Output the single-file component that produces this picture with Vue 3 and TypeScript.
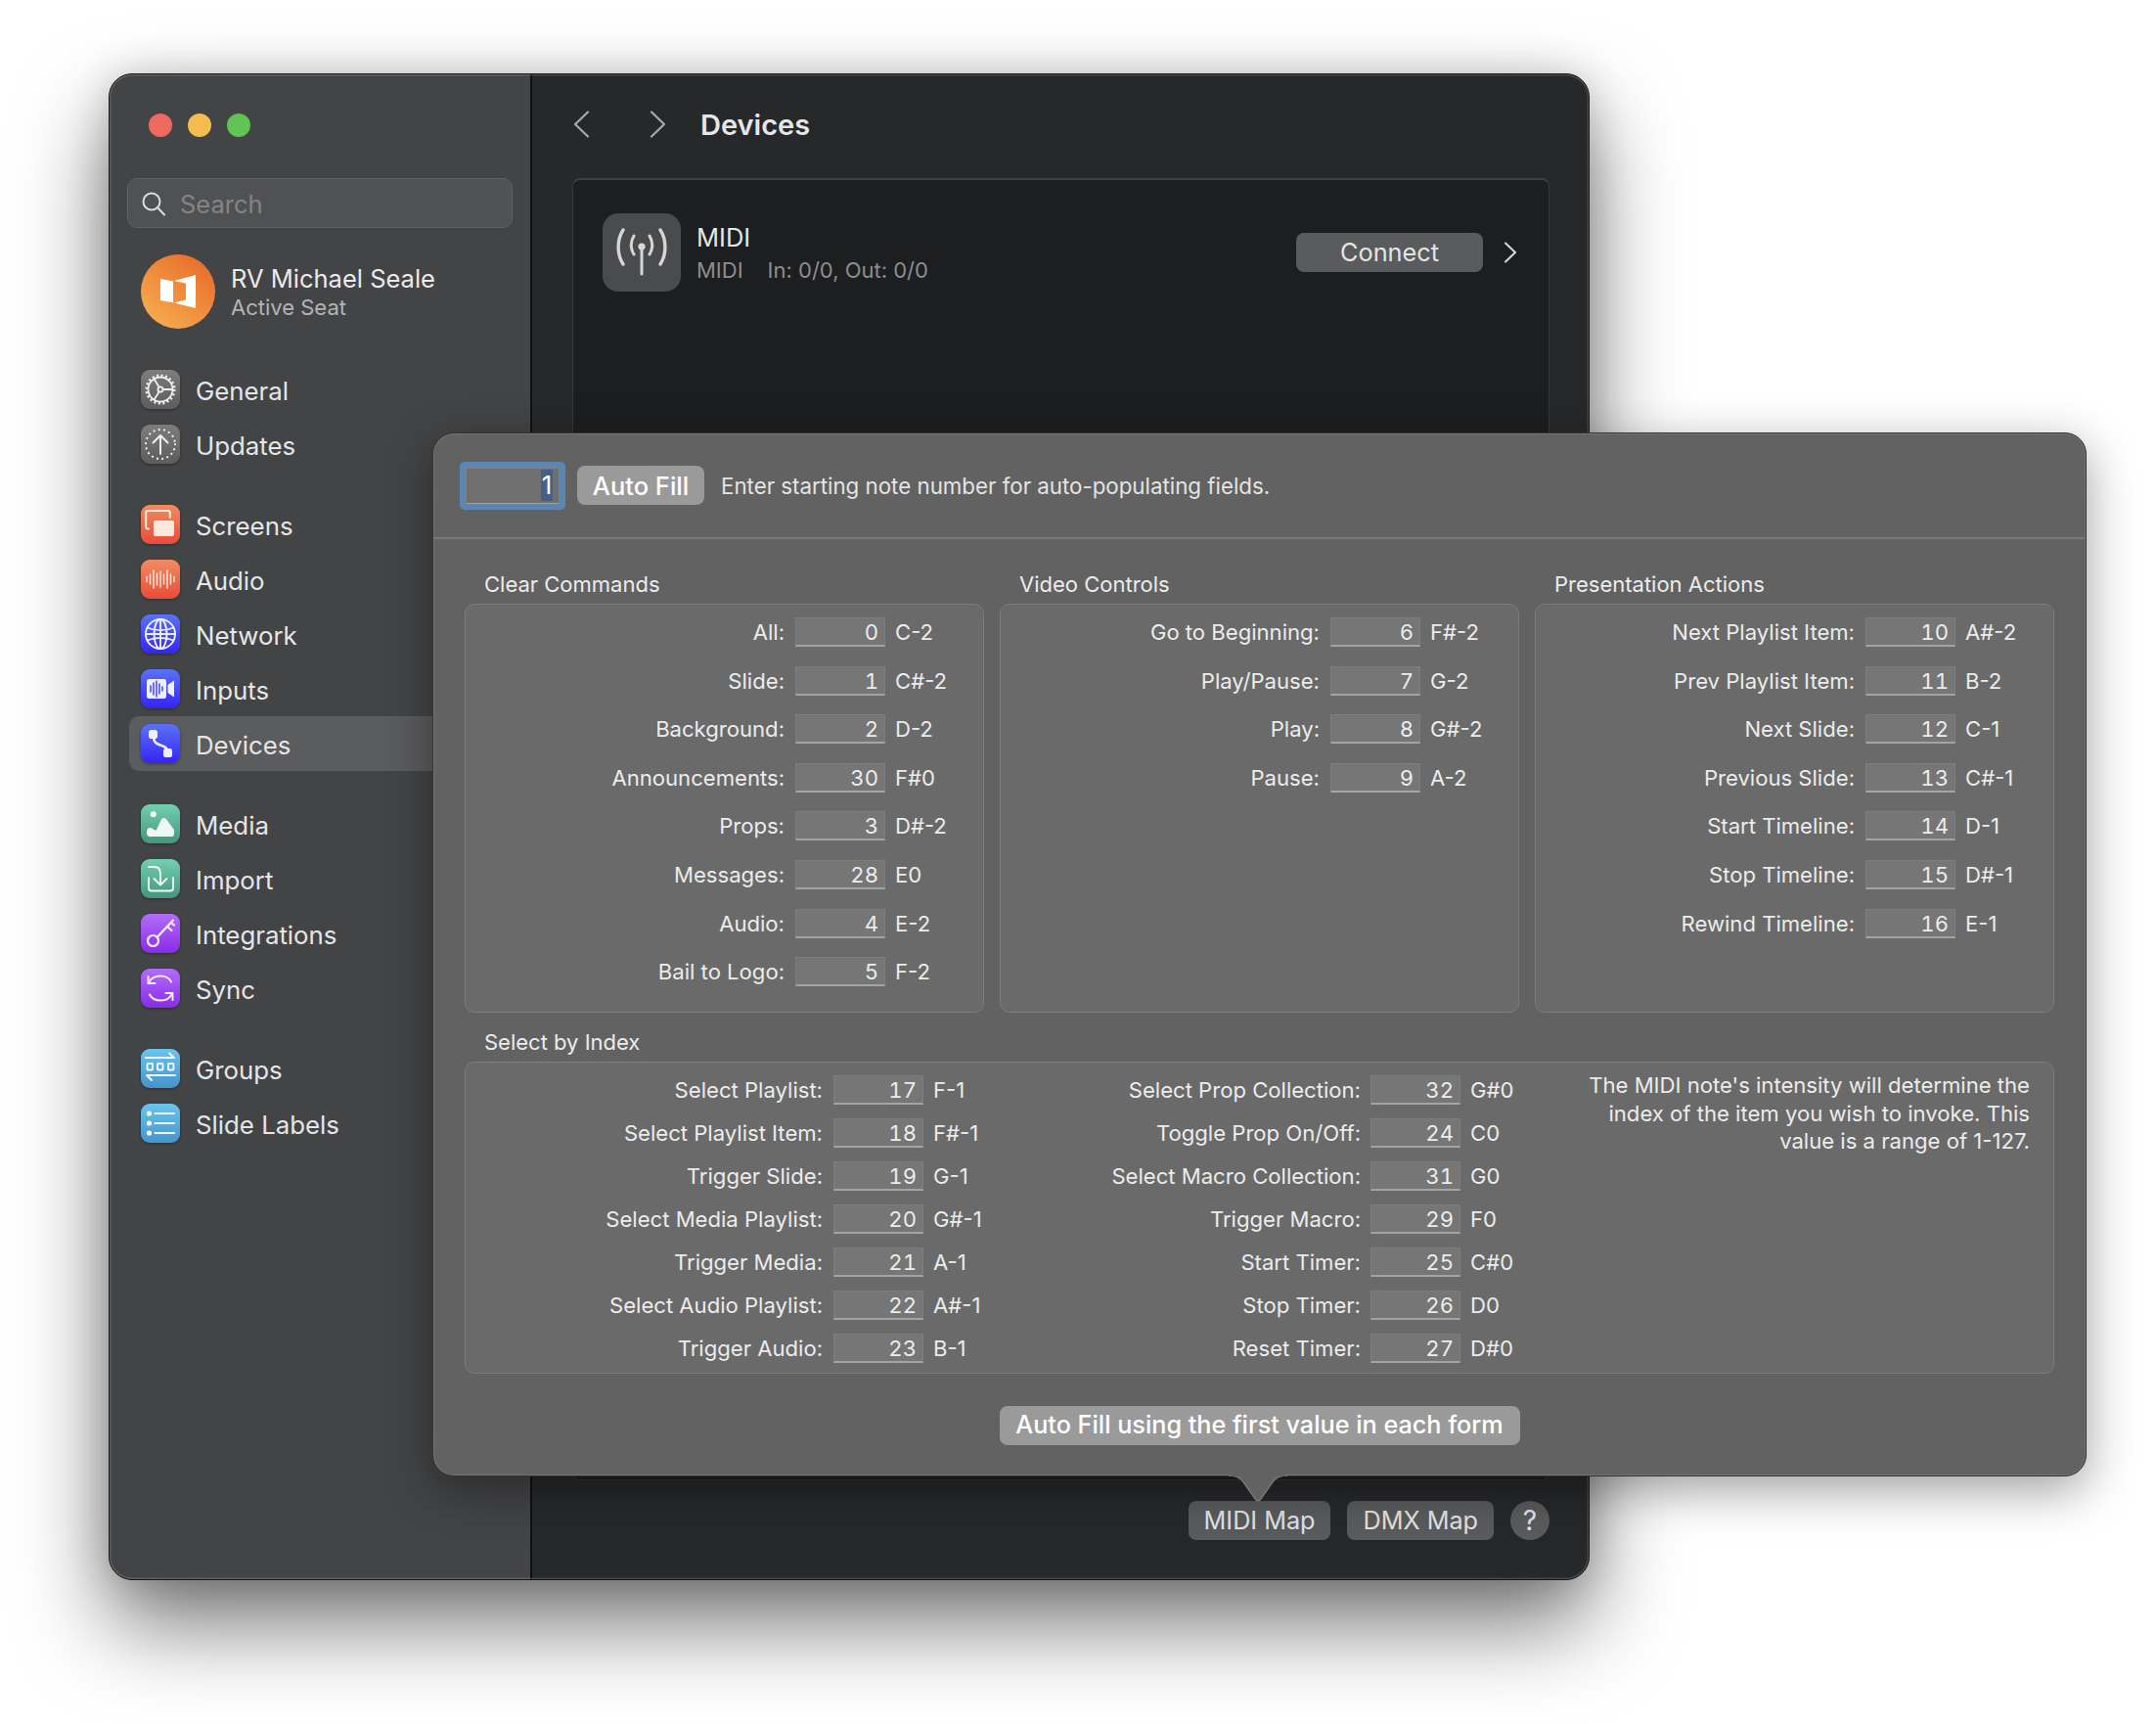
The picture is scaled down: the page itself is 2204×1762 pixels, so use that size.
<script setup lang="ts">
interface NavItem {
  label: string;
  icon: string;
  tint: string;
}

interface MapRow {
  label: string;
  value: number;
  note: string;
}

const navGroups: NavItem[][] = [
  [
    { label: "General", icon: "general", tint: "gray" },
    { label: "Updates", icon: "updates", tint: "gray" },
  ],
  [
    { label: "Screens", icon: "screens", tint: "red" },
    { label: "Audio", icon: "audio", tint: "red" },
    { label: "Network", icon: "network", tint: "blue" },
    { label: "Inputs", icon: "inputs", tint: "blue" },
    { label: "Devices", icon: "devices", tint: "blue" },
  ],
  [
    { label: "Media", icon: "media", tint: "green" },
    { label: "Import", icon: "import", tint: "green" },
    { label: "Integrations", icon: "integrations", tint: "purple" },
    { label: "Sync", icon: "sync", tint: "purple" },
  ],
  [
    { label: "Groups", icon: "groups", tint: "sky" },
    { label: "Slide Labels", icon: "labels", tint: "sky" },
  ],
];

const wave = [
  [6, 2.5],
  [9.5, 5],
  [13, 9],
  [16.5, 6],
  [20, 8],
  [23.5, 5],
  [27, 9],
  [30.5, 5],
  [34, 2.5],
];

const inputBars = [
  [10, 3],
  [13, 6],
  [16, 8],
  [19, 5],
  [22, 2],
];

const sections: { title: string; rows: MapRow[] }[] = [
  {
    title: "Clear Commands",
    rows: [
      { label: "All:", value: 0, note: "C-2" },
      { label: "Slide:", value: 1, note: "C#-2" },
      { label: "Background:", value: 2, note: "D-2" },
      { label: "Announcements:", value: 30, note: "F#0" },
      { label: "Props:", value: 3, note: "D#-2" },
      { label: "Messages:", value: 28, note: "E0" },
      { label: "Audio:", value: 4, note: "E-2" },
      { label: "Bail to Logo:", value: 5, note: "F-2" },
    ],
  },
  {
    title: "Video Controls",
    rows: [
      { label: "Go to Beginning:", value: 6, note: "F#-2" },
      { label: "Play/Pause:", value: 7, note: "G-2" },
      { label: "Play:", value: 8, note: "G#-2" },
      { label: "Pause:", value: 9, note: "A-2" },
    ],
  },
  {
    title: "Presentation Actions",
    rows: [
      { label: "Next Playlist Item:", value: 10, note: "A#-2" },
      { label: "Prev Playlist Item:", value: 11, note: "B-2" },
      { label: "Next Slide:", value: 12, note: "C-1" },
      { label: "Previous Slide:", value: 13, note: "C#-1" },
      { label: "Start Timeline:", value: 14, note: "D-1" },
      { label: "Stop Timeline:", value: 15, note: "D#-1" },
      { label: "Rewind Timeline:", value: 16, note: "E-1" },
    ],
  },
];

const indexLeft: MapRow[] = [
  { label: "Select Playlist:", value: 17, note: "F-1" },
  { label: "Select Playlist Item:", value: 18, note: "F#-1" },
  { label: "Trigger Slide:", value: 19, note: "G-1" },
  { label: "Select Media Playlist:", value: 20, note: "G#-1" },
  { label: "Trigger Media:", value: 21, note: "A-1" },
  { label: "Select Audio Playlist:", value: 22, note: "A#-1" },
  { label: "Trigger Audio:", value: 23, note: "B-1" },
];

const indexRight: MapRow[] = [
  { label: "Select Prop Collection:", value: 32, note: "G#0" },
  { label: "Toggle Prop On/Off:", value: 24, note: "C0" },
  { label: "Select Macro Collection:", value: 31, note: "G0" },
  { label: "Trigger Macro:", value: 29, note: "F0" },
  { label: "Start Timer:", value: 25, note: "C#0" },
  { label: "Stop Timer:", value: 26, note: "D0" },
  { label: "Reset Timer:", value: 27, note: "D#0" },
];

const indexColumns = [
  { name: "left", rows: indexLeft },
  { name: "right", rows: indexRight },
];

const noteLines = [
  "The MIDI note's intensity will determine the",
  "index of the item you wish to invoke. This",
  "value is a range of 1-127.",
];
</script>

<template>
  <div class="page">
    <div class="window">
      <aside class="sidebar">
        <div class="lights">
          <span class="light red"></span>
          <span class="light yellow"></span>
          <span class="light green"></span>
        </div>

        <div class="search">
          <svg width="26" height="26" viewBox="0 0 26 26" fill="none" stroke="#dcdcdc" stroke-width="2">
            <circle cx="11" cy="11" r="8.5" />
            <path d="M17.2 17.2 24 24.5" stroke-linecap="round" />
          </svg>
          <span>Search</span>
        </div>

        <div class="profile">
          <svg class="avatar" width="76" height="76" viewBox="0 0 76 76">
            <defs>
              <linearGradient id="avatarFill" x1="0.85" y1="0.1" x2="0.2" y2="0.95">
                <stop offset="0" stop-color="#e96f2c" />
                <stop offset="1" stop-color="#f5ab4e" />
              </linearGradient>
            </defs>
            <circle cx="38" cy="38" r="38" fill="url(#avatarFill)" />
            <path fill="#fff" d="M20 25l13 2.6v21.6L20 47zM56 21v34l-22-5.4 12-3V29.8l-12-2.8z" />
          </svg>
          <div class="profile-text">
            <div class="profile-name">RV Michael Seale</div>
            <div class="profile-seat">Active Seat</div>
          </div>
        </div>

        <nav class="nav">
          <div v-for="(group, g) in navGroups" :key="g" class="nav-group">
            <div
              v-for="item in group"
              :key="item.label"
              class="nav-row"
              :class="{ selected: item.label === 'Devices' }"
            >
              <span class="nav-icon" :class="item.tint">
                <svg width="40" height="40" viewBox="0 0 40 40" fill="none" stroke="#fff" stroke-width="1.8" stroke-linecap="round" stroke-linejoin="round">
                  <g v-if="item.icon === 'general'" stroke="#eee">
                    <circle cx="20" cy="20" r="12.5" />
                    <circle cx="20" cy="20" r="14.3" stroke-width="2.6" stroke-dasharray="2 2.5" stroke-linecap="butt" />
                    <circle cx="20" cy="20" r="2.6" />
                    <path d="M22.6 20H32M18.7 17.8 13.6 9.5M18.7 22.2 13.6 30.5" />
                  </g>
                  <g v-else-if="item.icon === 'updates'" stroke="#eee">
                    <circle cx="20" cy="20" r="15" stroke-width="2.2" stroke-dasharray="0.1 5.2" />
                    <path d="M20 30V11.5M12.5 18.5 20 11l7.5 7.5" stroke-width="2" />
                  </g>
                  <g v-else-if="item.icon === 'screens'">
                    <path d="M8 24.5H7a1.8 1.8 0 0 1-1.8-1.8V8a2 2 0 0 1 2-2H28a2 2 0 0 1 1.8 2v5" stroke="#ffe9df" stroke-width="2" />
                    <rect x="13" y="16" width="21" height="16" rx="2" fill="#ffe9df" stroke="none" />
                  </g>
                  <g v-else-if="item.icon === 'audio'" stroke="#ffe4da" stroke-width="1.5">
                    <path v-for="b in wave" :key="b[0]" :d="`M${b[0]} ${20 - b[1]}V${20 + b[1]}`" />
                  </g>
                  <g v-else-if="item.icon === 'network'" stroke="#eef0ff" stroke-width="1.9">
                    <circle cx="20" cy="20" r="15" />
                    <ellipse cx="20" cy="20" rx="6.5" ry="15" />
                    <path d="M6.5 13.5c8 3.5 19 3.5 27 0M6.5 26.5c8-3.5 19-3.5 27 0M5 20h30M20 5v30" />
                  </g>
                  <g v-else-if="item.icon === 'inputs'">
                    <rect x="6" y="10" width="20" height="20" rx="2.5" fill="#eef0ff" stroke="none" />
                    <path d="M34 11.5v17l-6.5-4.6v-7.8z" fill="#eef0ff" stroke="none" />
                    <path v-for="b in inputBars" :key="b[0]" :d="`M${b[0]} ${20 - b[1]}V${20 + b[1]}`" stroke="#4b4df5" stroke-width="1.6" />
                  </g>
                  <g v-else-if="item.icon === 'devices'" stroke="#eef0ff">
                    <rect x="8" y="6" width="9" height="9" rx="2.8" fill="#eef0ff" stroke="none" />
                    <rect x="23" y="25" width="9" height="9" rx="2.2" fill="#eef0ff" stroke="none" />
                    <path d="M13 13c0 6 3 7 7 8.5 4 1.500 7 2.500 7 6.500" stroke-width="2.6" />
                  </g>
                  <g v-else-if="item.icon === 'media'" stroke="none" fill="#eef8f4">
                    <circle cx="12.700" cy="10.300" r="3" />
                    <path d="M6 27.500c0-2 1.500-3.500 3.500-3.500 1.500 0 3 .8 4 2l2 .8 5.500-11.300c1.200-1.800 3.400-2 4.800-.4l8.200 10.900v4.500c0 1.300-1 2.500-2.500 2.500H8.500C7 32.500 6 31.300 6 29.500z" />
                  </g>
                  <g v-else-if="item.icon === 'import'" stroke="#eef8f4" stroke-width="1.9">
                    <path d="M8 8h6c4 0 6 3 6 7v11" />
                    <path d="M13.500 20 20 26.500 26.500 20" />
                    <path d="M8 19v10.500c0 2 1 3 3 3h19c2 0 3-1 3-3V19" />
                  </g>
                  <g v-else-if="item.icon === 'integrations'" stroke="#f5ecff" stroke-width="2.200">
                    <circle cx="12.500" cy="27.500" r="5.500" />
                    <path d="M17 23.500 33 6.500M27 13l4.500 4M31 9l3 2.500" />
                  </g>
                  <g v-else-if="item.icon === 'sync'" stroke="#f5ecff" stroke-width="2">
                    <path d="M8 14.500C10 10 15 7.500 20 7.500c4.500 0 9 2 11 6" />
                    <path d="M7.500 8v7h7" />
                    <path d="M32 25.500c-2 4.500-7 7-12 7-4.500 0-9-2-11-6" />
                    <path d="M32.500 32v-7h-7" />
                  </g>
                  <g v-else-if="item.icon === 'groups'" stroke="#f1f9fe" stroke-width="1.900">
                    <path d="M5 9h29M29 4.500 34 9" />
                    <rect x="6.500" y="15" width="5.500" height="6.500" rx="1" />
                    <rect x="17" y="15" width="5.500" height="6.500" rx="1" />
                    <rect x="28" y="15" width="5.500" height="6.500" rx="1" />
                    <path d="M35 27H6M11 32 6 27" />
                  </g>
                  <g v-else stroke="#f1f9fe" stroke-width="2.200">
                    <path d="M14.500 10H34M14.500 20H34M14.500 30H34" />
                    <circle cx="8.500" cy="10" r="1.500" fill="#f1f9fe" />
                    <circle cx="8.500" cy="20" r="1.500" fill="#f1f9fe" />
                    <circle cx="8.500" cy="30" r="1.500" fill="#f1f9fe" />
                  </g>
                </svg>
              </span>
              <span class="nav-label">{{ item.label }}</span>
            </div>
          </div>
        </nav>
      </aside>

      <main class="main">
        <header class="header">
          <svg class="chev-back" width="17" height="28" viewBox="0 0 17 28" fill="none" stroke="#a8a9aa" stroke-width="2.200" stroke-linecap="round" stroke-linejoin="round">
            <path d="M15 1.500 2 14l13 12.500" />
          </svg>
          <svg class="chev-next" width="17" height="28" viewBox="0 0 17 28" fill="none" stroke="#a8a9aa" stroke-width="2.200" stroke-linecap="round" stroke-linejoin="round">
            <path d="M2 1.500 15 14 2 26.500" />
          </svg>
          <h1>Devices</h1>
        </header>

        <section class="card">
          <div class="device">
            <span class="device-icon">
              <svg width="56" height="56" viewBox="0 0 56 56" fill="none" stroke="#d6d6d7" stroke-width="3" stroke-linecap="round">
                <circle cx="28" cy="22" r="3.600" fill="#d6d6d7" stroke="none" />
                <path d="M28 25v25" stroke-width="3" />
                <path d="M20 11c-3.500 6-3.500 13 0 19M36 11c3.500 6 3.500 13 0 19" />
                <path d="M9 5c-6.500 10-6.500 25 0 35M47 5c6.500 10 6.500 25 0 35" stroke-width="3.400" />
              </svg>
            </span>
            <div class="device-text">
              <div class="device-name">MIDI</div>
              <div class="device-meta"><span>MIDI</span><span>In: 0/0, Out: 0/0</span></div>
            </div>
            <button class="dark-btn connect">Connect</button>
            <svg class="chev-row" width="14" height="22" viewBox="0 0 14 22" fill="none" stroke="#dadada" stroke-width="2" stroke-linecap="round" stroke-linejoin="round">
              <path d="M2 1.500 12 11 2 20.500" />
            </svg>
          </div>
        </section>

        <footer class="footer">
          <button class="dark-btn">MIDI Map</button>
          <button class="dark-btn">DMX Map</button>
          <button class="dark-btn help">?</button>
        </footer>
      </main>

      <div class="popover">
        <div class="popover-top">
          <div class="focus-ring">
            <div class="start-field"><span class="selection">1</span></div>
          </div>
          <button class="light-btn">Auto Fill</button>
          <span class="hint">Enter starting note number for auto-populating fields.</span>
        </div>

        <div class="popover-body">
          <div class="columns">
            <div v-for="section in sections" :key="section.title">
              <div class="section-title">{{ section.title }}</div>
              <div class="box rows-box">
                <div v-for="row in section.rows" :key="row.label" class="map-row">
                  <span class="map-label">{{ row.label }}</span>
                  <span class="map-field">{{ row.value }}</span>
                  <span class="map-note">{{ row.note }}</span>
                </div>
              </div>
            </div>
          </div>

          <div class="section-title index-title">Select by Index</div>
          <div class="box index-box">
            <div v-for="col in indexColumns" :key="col.name" class="index-col" :class="col.name">
              <div v-for="row in col.rows" :key="row.label" class="map-row">
                <span class="map-label">{{ row.label }}</span>
                <span class="map-field">{{ row.value }}</span>
                <span class="map-note">{{ row.note }}</span>
              </div>
            </div>
            <div class="index-note">
              <div v-for="line in noteLines" :key="line">{{ line }}</div>
            </div>
          </div>

          <div class="bottom-action">
            <button class="light-btn wide">Auto Fill using the first value in each form</button>
          </div>
        </div>

        <svg class="arrow" width="60" height="28" viewBox="0 0 60 28">
          <path d="M0 1C8 1 12 3 16 9L27.500 25.500Q30 28 32.500 25.500L44 9C48 3 52 1 60 1" fill="#626262" stroke="#777" stroke-width="1.500" />
          <path d="M2 0H58V2H2z" fill="#626262" />
        </svg>
      </div>
    </div>
  </div>
</template>

<style>
html,
body {
  background: #fff;
}
</style>

<style scoped>
.page {
  width: 2204px;
  height: 1762px;
  box-sizing: border-box;
  padding: 75px 0 0 111px;
  font-family: Inter, "Liberation Sans", sans-serif;
  overflow: hidden;
}

button {
  font-family: inherit;
  border: none;
  padding: 0;
}

.window {
  position: relative;
  display: flex;
  width: 1514px;
  height: 1540px;
  box-sizing: border-box;
  border: 1px solid #18181a;
  border-radius: 24px;
  box-shadow: 0 44px 90px rgba(0, 0, 0, 0.55), 0 0 40px rgba(0, 0, 0, 0.16);
  background: #27282a;
}

.window::after {
  content: "";
  position: absolute;
  inset: 0;
  border-radius: 23px;
  box-shadow: inset 0 0 0 1.500px rgba(255, 255, 255, 0.14);
  pointer-events: none;
}

.sidebar {
  width: 432px;
  flex-shrink: 0;
  box-sizing: border-box;
  padding: 40px 0 0 18px;
  background: #434446;
  border-right: 2px solid #111;
  border-radius: 23px 0 0 23px;
}

.lights {
  display: flex;
  gap: 16px;
  padding-left: 22px;
}

.light {
  width: 24px;
  height: 24px;
  border-radius: 50%;
}

.light.red {
  background: #ee6a5f;
}

.light.yellow {
  background: #f5bd4f;
}

.light.green {
  background: #5fc454;
}

.search {
  display: flex;
  align-items: center;
  gap: 14px;
  width: 394px;
  height: 51px;
  box-sizing: border-box;
  margin-top: 42px;
  padding-left: 13px;
  border: 1px solid #5f6062;
  border-radius: 10px;
  background: #505153;
  color: #838486;
  font-size: 25.500px;
}

.search span {
  padding-top: 2px;
}

.profile {
  display: flex;
  align-items: center;
  margin: 27px 0 34px 14px;
}

.profile-text {
  margin-left: 16px;
}

.profile-name {
  color: #eaeaea;
  font-size: 25.500px;
  line-height: 32px;
}

.profile-seat {
  color: #b4b4b5;
  font-size: 22px;
  line-height: 27px;
}

.nav {
  display: flex;
  flex-direction: column;
  gap: 26px;
  margin-left: 2px;
}

.nav-row {
  display: flex;
  align-items: center;
  height: 56px;
  padding-left: 12px;
  border-radius: 10px 0 0 10px;
}

.nav-row.selected {
  background: #5b5c5e;
}

.nav-icon {
  display: flex;
  width: 40px;
  height: 40px;
  border-radius: 9px;
  box-shadow: 0 1px 3px rgba(0, 0, 0, 0.35);
}

.nav-icon.gray {
  background: linear-gradient(#7d7d7d, #5c5c5c);
}

.nav-icon.red {
  background: linear-gradient(#f08c62, #e84c38);
}

.nav-icon.blue {
  background: linear-gradient(#5a72f6, #3424f6);
}

.nav-icon.green {
  background: linear-gradient(#74cfb1, #44957c);
}

.nav-icon.purple {
  background: linear-gradient(#b26ef8, #8a2aea);
}

.nav-icon.sky {
  background: linear-gradient(#69c6ea, #4494cd);
}

.nav-label {
  margin-left: 16px;
  padding-top: 2px;
  color: #e6e6e6;
  font-size: 25.800px;
}

.main {
  flex: 1;
  display: flex;
  flex-direction: column;
  min-width: 0;
  padding: 0 40px 40px 40.500px;
}

.header {
  display: flex;
  align-items: center;
  height: 104px;
  flex-shrink: 0;
  margin-bottom: 2px;
  padding: 0 0 2px 1.500px;
  box-sizing: border-box;
}

.chev-next {
  margin-left: 61px;
}

.header h1 {
  margin: 0 0 0 35px;
  color: #e6e6e6;
  font-size: 29px;
  font-weight: 600;
}

.card {
  flex: 1;
  box-sizing: border-box;
  border: 1px solid #36373a;
  border-top: 2px solid #3f4042;
  border-radius: 8px;
  background: #1d1e20;
}

.device {
  display: flex;
  align-items: center;
  padding: 34px 32px 0 30.500px;
}

.device-icon {
  display: flex;
  align-items: center;
  justify-content: center;
  width: 80px;
  height: 80px;
  border-radius: 16px;
  background: #4a4b4d;
}

.device-text {
  flex: 1;
  margin-left: 16px;
}

.device-name {
  color: #e6e6e6;
  font-size: 25.500px;
  line-height: 36px;
}

.device-meta {
  display: flex;
  gap: 25px;
  color: #8c8d8f;
  font-size: 22px;
  line-height: 30px;
}

.dark-btn {
  height: 40px;
  border-radius: 8px;
  background: #5a5b5d;
  color: #e4e4e4;
  font-size: 25.200px;
  padding: 0 16px;
}

.connect {
  width: 191px;
  padding-bottom: 2px;
  font-size: 25.300px;
}

.chev-row {
  margin-left: 21px;
}

.footer {
  display: flex;
  justify-content: flex-end;
  gap: 17px;
  flex-shrink: 0;
  margin-top: 21px;
}

.help {
  width: 40px;
  padding: 0;
  border-radius: 50%;
  font-size: 28px;
}

.popover {
  position: absolute;
  z-index: 2;
  left: 330px;
  top: 366px;
  width: 1691px;
  height: 1067px;
  box-sizing: border-box;
  border: 1px solid #333;
  border-radius: 22px;
  background: #626262;
  box-shadow: inset 0 0 0 1px #747474, 0 14px 50px rgba(0, 0, 0, 0.38);
}

.popover-top {
  display: flex;
  align-items: center;
  height: 106px;
  padding-left: 27px;
  border-bottom: 2px solid #787878;
  box-sizing: content-box;
}

.focus-ring {
  width: 108px;
  height: 49px;
  box-sizing: border-box;
  padding: 6px;
  border-radius: 5px;
  background: #5b86b4;
}

.start-field {
  height: 37px;
  box-sizing: border-box;
  display: flex;
  align-items: center;
  justify-content: flex-end;
  padding-right: 6px;
  border: 1px solid #808080;
  border-bottom-color: #a0a0a0;
  background: #6f6f6f;
  color: #fff;
  font-size: 26px;
}

.selection {
  width: 12px;
  height: 32px;
  line-height: 32px;
  text-align: center;
  background: #44608a;
}

.light-btn {
  height: 40px;
  border-radius: 8px;
  background: #9a9a9a;
  color: #fff;
  font-size: 25.500px;
  font-weight: 500;
}

.popover-top .light-btn {
  width: 130px;
  margin-left: 12px;
}

.hint {
  margin-left: 17px;
  color: #e4e4e4;
  font-size: 22.300px;
}

.popover-body {
  padding: 32px 32px 0 32px;
}

.columns {
  display: grid;
  grid-template-columns: repeat(3, 1fr);
  gap: 16px;
}

.section-title {
  height: 28px;
  line-height: 28px;
  margin-bottom: 6px;
  padding-left: 20px;
  color: #ececec;
  font-size: 22px;
}

.index-title {
  margin-top: 16px;
}

.box {
  box-sizing: border-box;
  border: 1px solid #7c7c7c;
  border-radius: 10px;
  background: #6a6a6a;
}

.rows-box {
  display: flex;
  flex-direction: column;
  gap: 19.600px;
  height: 418px;
  padding-top: 13px;
}

.map-row {
  display: flex;
  align-items: center;
  height: 30px;
  color: #ececec;
  font-size: 22.100px;
}

.map-label {
  width: 326px;
  flex-shrink: 0;
  text-align: right;
  white-space: nowrap;
}

.map-field {
  width: 92px;
  height: 30px;
  box-sizing: border-box;
  flex-shrink: 0;
  margin-left: 11px;
  padding-right: 6px;
  border: 1px solid #7e7e7e;
  border-bottom: 2px solid #a4a4a4;
  background: #767676;
  line-height: 28px;
  text-align: right;
  font-variant-numeric: tabular-nums;
}

.map-note {
  margin-left: 10px;
  white-space: nowrap;
}

.index-box {
  display: flex;
  height: 319px;
  padding-top: 13px;
}

.index-col {
  display: flex;
  flex-direction: column;
  gap: 14px;
  flex-shrink: 0;
}

.index-col.left {
  width: 545px;
}

.index-col.left .map-label {
  width: 365px;
}

.index-col.right .map-label {
  width: 370px;
}

.index-col.right .map-field {
  margin-left: 10px;
}

.index-note {
  margin: -4px 24px 0 auto;
  color: #ececec;
  font-size: 22.100px;
  line-height: 28.700px;
  text-align: right;
  white-space: nowrap;
}

.bottom-action {
  display: flex;
  justify-content: center;
  margin-top: 33px;
}

.light-btn.wide {
  width: 532px;
  padding-bottom: 2px;
  font-size: 25.200px;
}

.arrow {
  position: absolute;
  left: 813px;
  bottom: -27px;
}
</style>
